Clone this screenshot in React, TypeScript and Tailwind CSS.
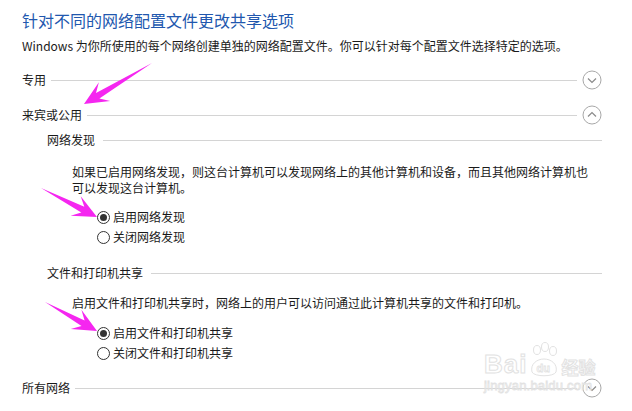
import React from "react";

type Pt = [number, number];

// pink annotation arrow, geometry from tail + tip
const Arrow = ({ from, to }: { from: Pt; to: Pt }) => {
	const dx = to[0] - from[0];
	const dy = to[1] - from[1];
	const len = Math.hypot(dx, dy);
	const ux = dx / len;
	const uy = dy / len;
	const nx = -uy;
	const ny = ux;
	const at = (back: number, side: number): string =>
		`${(to[0] - ux * back + nx * side).toFixed(1)},${(to[1] - uy * back + ny * side).toFixed(1)}`;
	const pts = [
		`${from[0]},${from[1]}`,
		at(16, 3.2),
		at(24, 11),
		`${to[0]},${to[1]}`,
		at(24, -11),
		at(16, -3.2),
	].join(" ");
	return <polygon points={pts} fill="#f526f0" />;
};

const Chevron = ({ up }: { up?: boolean }) => (
	<svg width="20" height="20" viewBox="0 0 20 20" className="shrink-0">
		<circle cx="10" cy="10" r="9" fill="white" stroke="#a8a8a8" strokeWidth="1" />
		<path
			d={up ? "M6 11.5 L10 7.5 L14 11.5" : "M6 8.5 L10 12.5 L14 8.5"}
			fill="none"
			stroke="#8a8a8a"
			strokeWidth="1.2"
		/>
	</svg>
);

const Section = ({ label, up, className }: { label: string; up?: boolean; className?: string }) => (
	<div className={`flex h-[20px] items-center pr-[30px] ${className ?? ""}`}>
		<span className="whitespace-nowrap">{label}</span>
		<div className="ml-[5px] mr-[5px] h-px flex-1 bg-[#d4d4d4]" />
		<Chevron up={up} />
	</div>
);

const SubSection = ({ label, className }: { label: string; className?: string }) => (
	<div className={`flex h-[20px] items-center pl-[25px] pr-[30px] ${className ?? ""}`}>
		<span className="whitespace-nowrap">{label}</span>
		<div className="ml-[8px] h-px flex-1 bg-[#d4d4d4]" />
	</div>
);

const Radio = ({ label, checked }: { label: string; checked?: boolean }) => (
	<div className="flex h-[20px] items-center pl-[75px]">
		<span className="flex h-[13px] w-[13px] items-center justify-center rounded-full border border-[#333333] bg-white">
			{checked && <span className="h-[7px] w-[7px] rounded-full bg-[#333333]" />}
		</span>
		<span className="ml-[3px] whitespace-nowrap">{label}</span>
	</div>
);

const Watermark = () => (
	<div className="pointer-events-none absolute left-[484px] top-[342px] flex flex-col">
		<div className="flex items-end">
			<span className="text-[26px] font-bold leading-[28px] tracking-[1px] text-transparent [-webkit-text-stroke:1px_#e2e2e2] font-['Liberation_Sans',sans-serif]">
				Bai
			</span>
			<svg width="30" height="36" viewBox="0 0 30 36" className="mx-[2px]">
				<g fill="none" stroke="#e2e2e2" strokeWidth="1">
					<ellipse cx="8" cy="8" rx="3.5" ry="4.5" />
					<ellipse cx="16" cy="5" rx="3.5" ry="4.5" />
					<ellipse cx="24" cy="9" rx="3.5" ry="4.5" />
					<path d="M3 30 C1 22 8 17 15 17 C22 17 29 22 27 30 C25 35 5 35 3 30 Z" />
				</g>
				<text x="7.5" y="30" fontSize="11" fontWeight="bold" fill="none" stroke="#e2e2e2" strokeWidth="0.8" fontFamily="Liberation Sans, sans-serif">
					du
				</text>
			</svg>
			<span className="text-[17px] font-bold leading-[22px] text-transparent [-webkit-text-stroke:1px_#e2e2e2] font-['Noto_Sans_CJK_SC',sans-serif]">
				经验
			</span>
		</div>
		<span className="mt-[1px] text-[13px] leading-[14px] tracking-[0.2px] text-transparent [-webkit-text-stroke:0.8px_#e2e2e2] font-['Liberation_Sans',sans-serif]">
			jingyan.baidu.com
		</span>
	</div>
);

export default function App() {
	return (
		<div className="relative h-[411px] w-[632px] overflow-hidden bg-white pl-[22px] pt-[8px] text-[12px] leading-[16px] text-[#1a1a1a] font-['Noto_Sans_CJK_SC','Noto_Sans',sans-serif]">
			<h1 className="h-[24px] text-[16px] leading-[24px] text-[#2157ae]">针对不同的网络配置文件更改共享选项</h1>
			<p className="mt-[5px] whitespace-nowrap leading-[18px]">
				Windows 为你所使用的每个网络创建单独的网络配置文件。你可以针对每个配置文件选择特定的选项。
			</p>

			<Section label="专用" className="mt-[15px]" />
			<Section label="来宾或公用" up className="mt-[15px]" />

			<SubSection label="网络发现" className="mt-[5px]" />
			<p className="mt-[14px] whitespace-nowrap pl-[50px]">
				如果已启用网络发现，则这台计算机可以发现网络上的其他计算机和设备，而且其他网络计算机也
				<br />
				可以发现这台计算机。
			</p>
			<div className="mt-[11px]">
				<Radio label="启用网络发现" checked />
				<Radio label="关闭网络发现" />
			</div>

			<SubSection label="文件和打印机共享" className="mt-[16px]" />
			<p className="mt-[12px] whitespace-nowrap pl-[50px]">
				启用文件和打印机共享时，网络上的用户可以访问通过此计算机共享的文件和打印机。
			</p>
			<div className="mt-[12px]">
				<Radio label="启用文件和打印机共享" checked />
				<Radio label="关闭文件和打印机共享" />
			</div>

			<Section label="所有网络" className="mt-[15px]" />

			<Watermark />

			<svg className="pointer-events-none absolute left-0 top-0" width="632" height="411">
				<Arrow from={[152, 63]} to={[84, 104]} />
				<Arrow from={[41, 188]} to={[97, 217]} />
				<Arrow from={[45, 302]} to={[97, 331]} />
			</svg>
		</div>
	);
}
